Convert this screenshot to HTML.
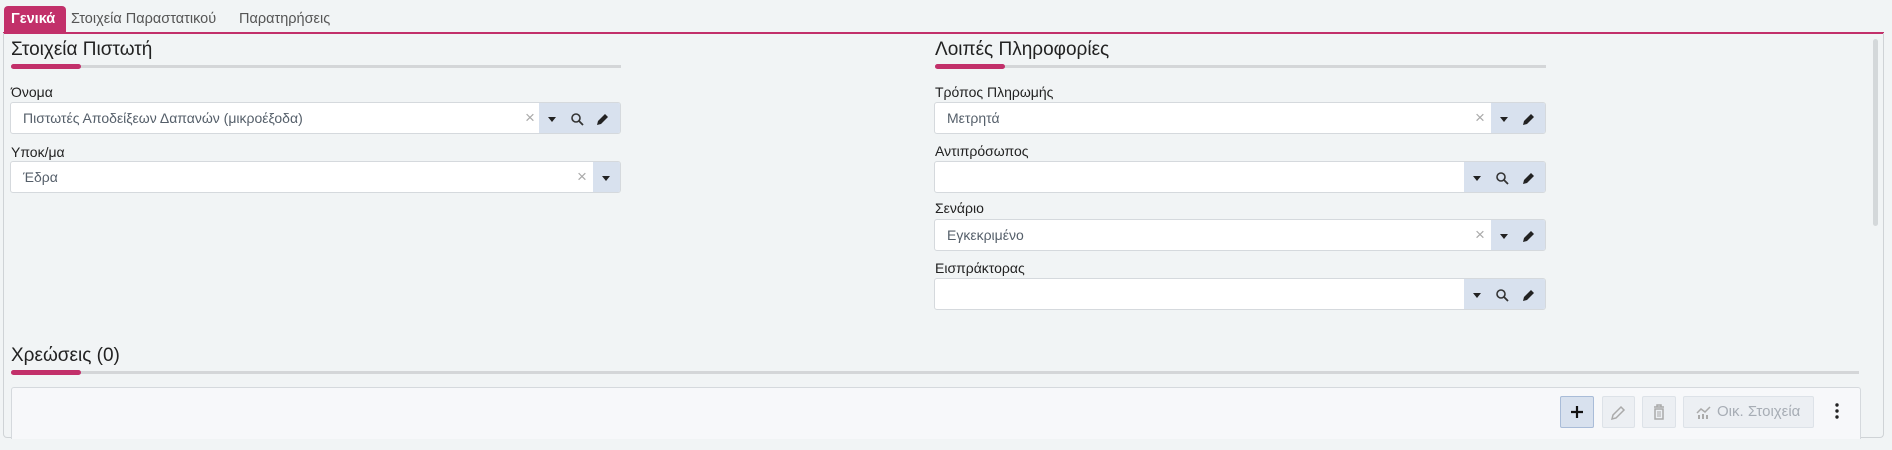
<!DOCTYPE html>
<html><head><meta charset="utf-8"><style>
*{box-sizing:border-box;margin:0;padding:0}
body{width:1892px;height:450px;background:#f1f4f5;font-family:"Liberation Sans",sans-serif;position:relative;overflow:hidden;color:#222}
.a{position:absolute}
.frame{left:3px;top:33px;width:1881px;height:405px;border:1px solid #cfd3d6;border-top:none;border-radius:0 0 4px 4px}
.pink{left:3px;top:32px;width:1881px;height:2px;background:#c2306a}
.tab{top:6px;height:27px;font-size:14.5px;line-height:27px}
.h{font-size:19px;color:#222}
.ul{height:3px;background:#d4d6d8}
.ul i{position:absolute;left:0;top:-1px;height:5px;border-radius:3px;background:#c2306a}
.lbl{font-size:14px;color:#222}
.inp{background:#fff;border:1px solid #d5d9dd;border-radius:3px;height:32px;overflow:hidden}
.inp .t{position:absolute;left:12px;top:7px;font-size:14px;color:#555f6a}
.inp .btns{position:absolute;right:0;top:0;bottom:0;background:#d8e1ee}
.x{position:absolute;top:5px;font-size:17px;color:#aaa}
.ic{position:absolute;top:0}
.tb{top:396px;height:32px;border:1px solid #dde2e8;background:#eceff3;border-radius:2px}
</style></head><body>
<div class="a" style="left:4px;top:6px;width:62px;height:27px;background:#c2306a;border-radius:4px 4px 0 0"></div>
<div class="a tab" style="left:11px;color:#fff;font-weight:bold">Γενικά</div>
<div class="a tab" style="left:71px;color:#555">Στοιχεία Παραστατικού</div>
<div class="a tab" style="left:239px;color:#555">Παρατηρήσεις</div>
<div class="a pink"></div>
<div class="a frame"></div>
<div class="a" style="left:1873px;top:39px;width:5px;height:187px;background:#d4d8da;border-radius:3px"></div>

<div class="a h" style="left:11px;top:39px">Στοιχεία Πιστωτή</div>
<div class="a ul" style="left:11px;top:65px;width:610px"><i style="width:70px"></i></div>

<div class="a h" style="left:935px;top:39px">Λοιπές Πληροφορίες</div>
<div class="a ul" style="left:935px;top:65px;width:611px"><i style="width:70px"></i></div>

<svg width="0" height="0" style="position:absolute"><defs>
<g id="dd"><path d="M0 0h8l-4 5z" fill="#222"/></g>
<g id="sr"><circle cx="5" cy="5" r="4" fill="none" stroke="#333" stroke-width="1.6"/><path d="M8 8l4 4" stroke="#333" stroke-width="1.8"/></g>
<g id="pe"><path d="M1 12l1-4 7-7 3 3-7 7z" fill="#222"/></g>
</defs></svg>

<!-- left fields -->
<div class="a lbl" style="left:11px;top:84px">Όνομα</div>
<div class="a inp" style="left:10px;top:102px;width:611px;height:32px">
 <span class="t">Πιστωτές Αποδείξεων Δαπανών (μικροέξοδα)</span>
 <span class="x" style="left:514px">×</span>
 <div class="btns" style="width:81px">
  <svg class="ic" width="81" height="32"><use href="#dd" x="9" y="14"/><use href="#sr" x="32" y="10"/><use href="#pe" x="57" y="10"/></svg>
 </div>
</div>
<div class="a lbl" style="left:11px;top:144px">Υποκ/μα</div>
<div class="a inp" style="left:10px;top:161px;width:611px">
 <span class="t">Έδρα</span>
 <span class="x" style="left:566px">×</span>
 <div class="btns" style="width:27px"><svg class="ic" width="27" height="32"><use href="#dd" x="9" y="14"/></svg></div>
</div>

<!-- right fields -->
<div class="a lbl" style="left:935px;top:84px">Τρόπος Πληρωμής</div>
<div class="a inp" style="left:934px;top:102px;width:612px">
 <span class="t">Μετρητά</span>
 <span class="x" style="left:540px">×</span>
 <div class="btns" style="width:54px"><svg class="ic" width="54" height="32"><use href="#dd" x="9" y="14"/><use href="#sr" x="-100" y="0"/><use href="#pe" x="31" y="10"/></svg></div>
</div>
<div class="a lbl" style="left:935px;top:143px">Αντιπρόσωπος</div>
<div class="a inp" style="left:934px;top:161px;width:612px">
 <div class="btns" style="width:81px"><svg class="ic" width="81" height="32"><use href="#dd" x="9" y="14"/><use href="#sr" x="32" y="10"/><use href="#pe" x="58" y="10"/></svg></div>
</div>
<div class="a lbl" style="left:935px;top:200px">Σενάριο</div>
<div class="a inp" style="left:934px;top:219px;width:612px">
 <span class="t">Εγκεκριμένο</span>
 <span class="x" style="left:540px">×</span>
 <div class="btns" style="width:54px"><svg class="ic" width="54" height="32"><use href="#dd" x="9" y="14"/><use href="#pe" x="31" y="10"/></svg></div>
</div>
<div class="a lbl" style="left:935px;top:260px">Εισπράκτορας</div>
<div class="a inp" style="left:934px;top:278px;width:612px">
 <div class="btns" style="width:81px"><svg class="ic" width="81" height="32"><use href="#dd" x="9" y="14"/><use href="#sr" x="32" y="10"/><use href="#pe" x="58" y="10"/></svg></div>
</div>

<div class="a h" style="left:11px;top:345px">Χρεώσεις (0)</div>
<div class="a ul" style="left:11px;top:371px;width:1848px"><i style="width:70px"></i></div>

<div class="a" style="left:11px;top:387px;width:1850px;height:52px;background:#f7f8fa;border:1px solid #d5d9dd;border-bottom:none;border-radius:3px 3px 0 0"></div>
<div class="a tb" style="left:1560px;width:34px;background:#d8e1ee;border-color:#a9bcd8"><svg width="32" height="30"><path d="M10 15h12M16 9v12" stroke="#111" stroke-width="2.2"/></svg></div>
<div class="a tb" style="left:1602px;width:33px"><svg width="31" height="30"><path d="M9 22l1-4 8-8 3 3-8 8z" fill="none" stroke="#aaa" stroke-width="1.5"/></svg></div>
<div class="a tb" style="left:1642px;width:34px"><svg width="32" height="30"><path d="M11 10h10M14 10V8h4v2M12 12h8v10h-8z" fill="none" stroke="#aaa" stroke-width="1.5"/><path d="M15 14v6M17 14v6" stroke="#aaa"/></svg></div>
<div class="a tb" style="left:1683px;width:131px;color:#a7adb5;font-size:15px;line-height:30px"><svg width="16" height="14" style="position:absolute;left:12px;top:8px"><path d="M1 8l4-4 4 3 5-5" fill="none" stroke="#aaa" stroke-width="1.5"/><path d="M2 10h2v4H2zM6 9h2v5H6zM10 10h2v4h-2z" fill="#aaa"/></svg><span style="position:absolute;left:33px">Οικ. Στοιχεία</span></div>
<svg class="a" style="left:1833px;top:402px" width="8" height="20"><circle cx="4" cy="3" r="1.7" fill="#222"/><circle cx="4" cy="9" r="1.7" fill="#222"/><circle cx="4" cy="15" r="1.7" fill="#222"/></svg>
</body></html>
